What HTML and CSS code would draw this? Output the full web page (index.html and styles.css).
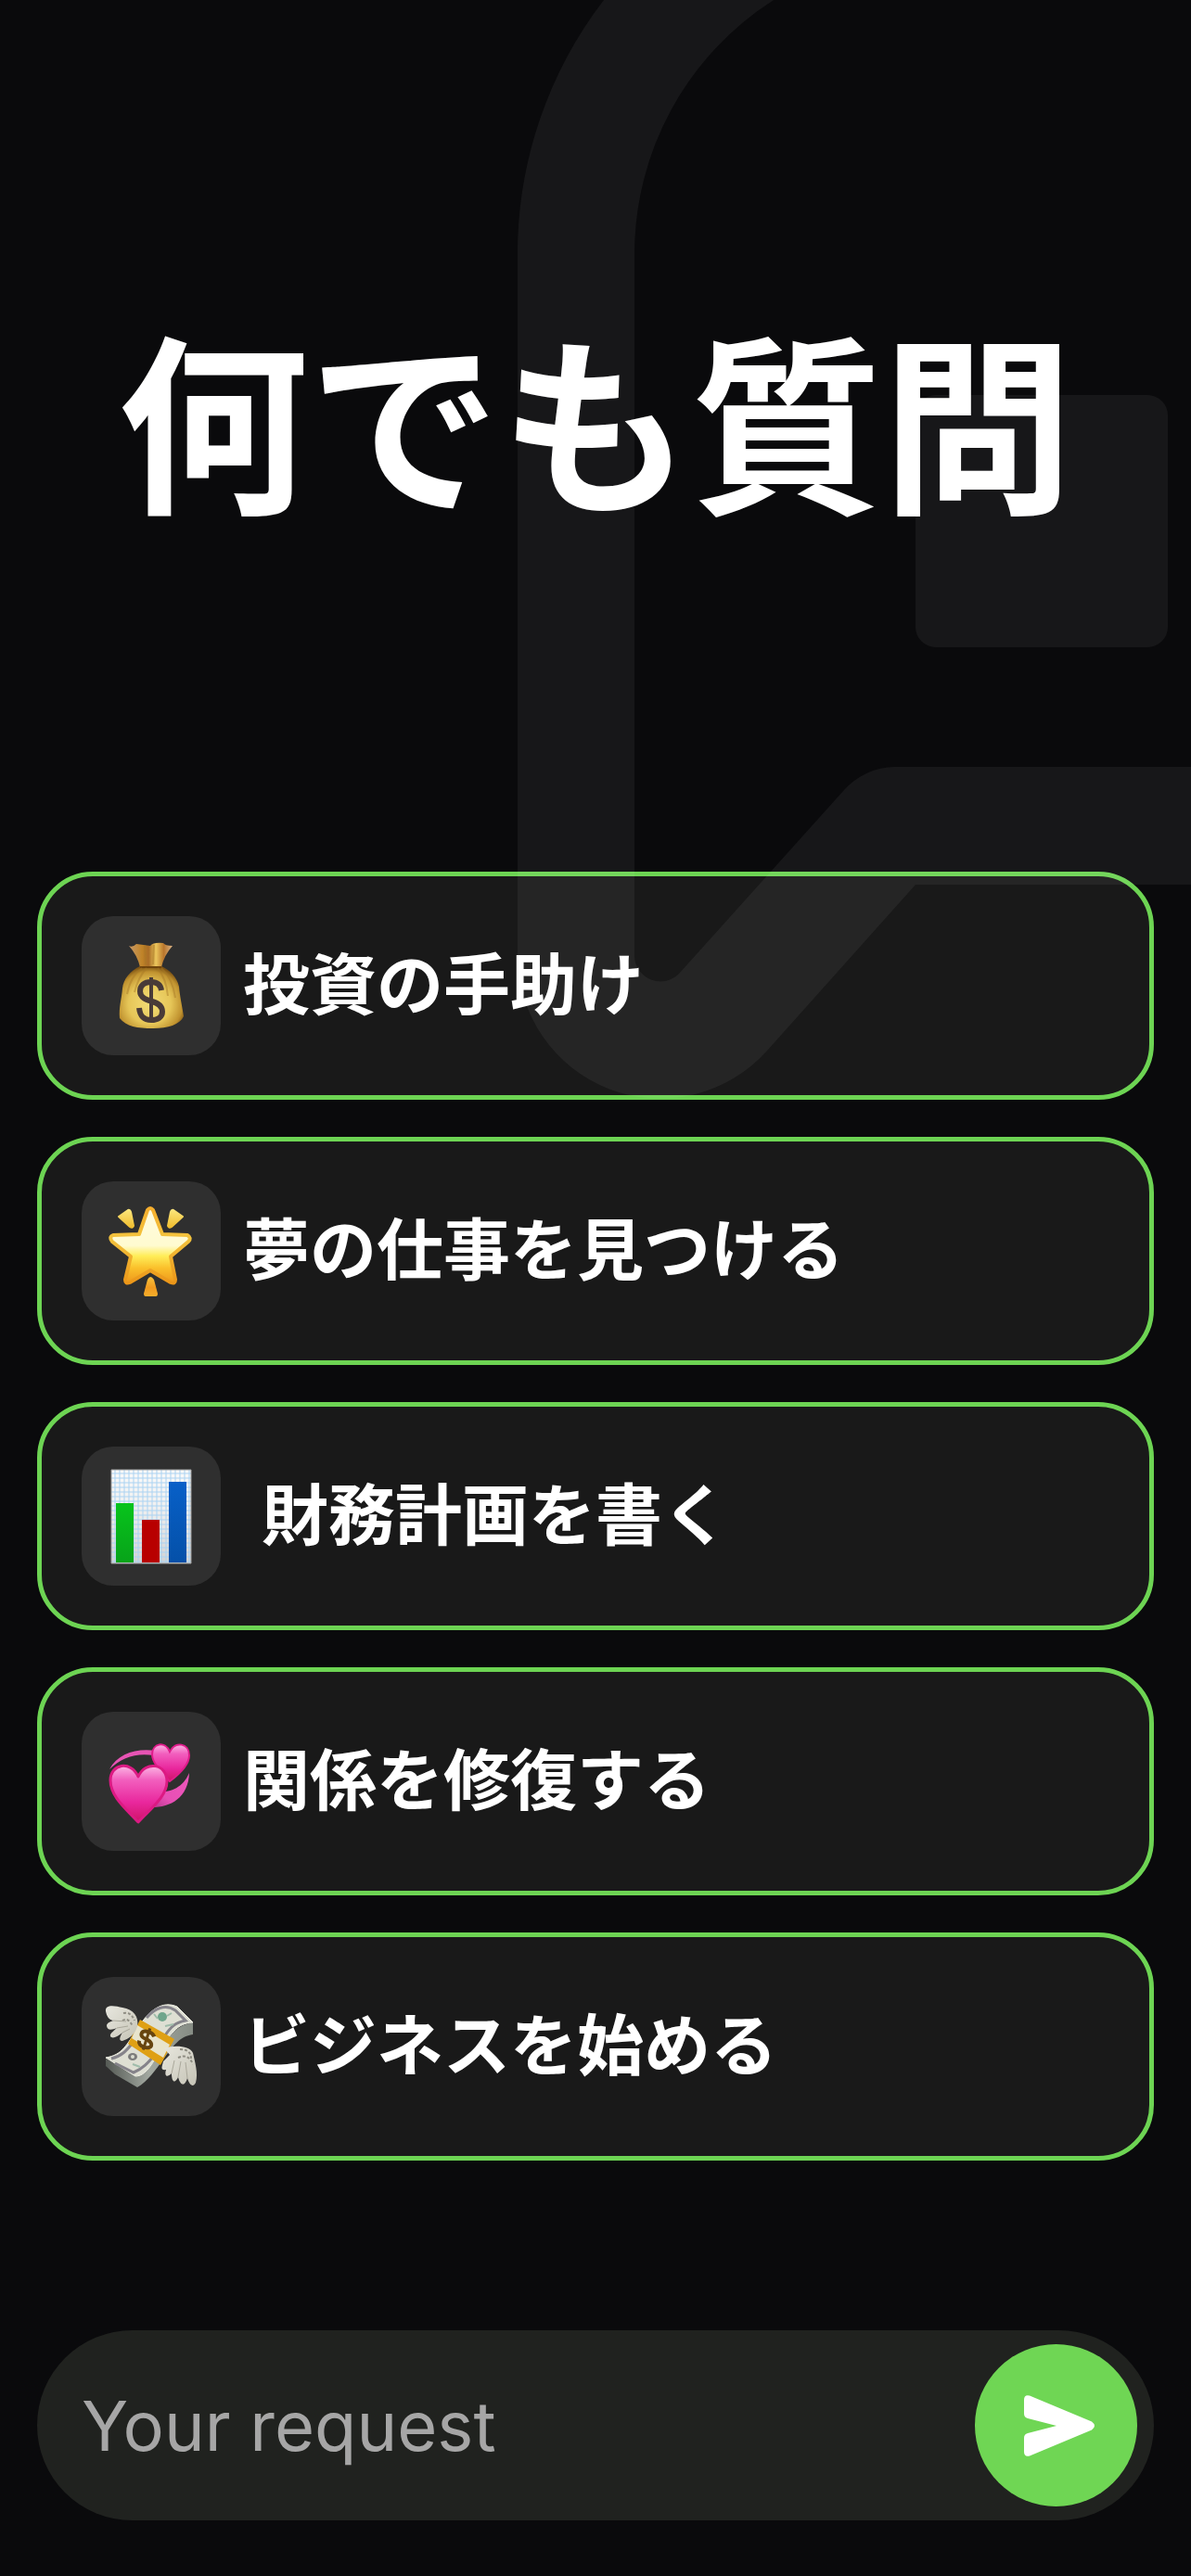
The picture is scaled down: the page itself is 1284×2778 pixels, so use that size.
FILE: index.html
```html
<!DOCTYPE html>
<html lang="ja">
<head>
<meta charset="utf-8">
<meta name="viewport" content="width=device-width, initial-scale=1">
<title>何でも質問</title>
<link rel="stylesheet" href="styles.css">
</head>
<body>
<main class="screen">
  <h1 class="title">何でも質問</h1>

  <div class="topics">
    <button class="topic" type="button">
      <span class="tile">
        <svg class="icon" viewBox="0 0 150 150" aria-hidden="true">
          <defs>
            <radialGradient id="bag" cx=".47" cy=".6" r=".6"><stop offset="0" stop-color="#f3dc76"/><stop offset=".55" stop-color="#e6c658"/><stop offset=".85" stop-color="#c0922f"/><stop offset="1" stop-color="#7c5213"/></radialGradient>
            <linearGradient id="neck" x1="0" x2="1" y1="0" y2="0"><stop offset="0" stop-color="#c99a68"/><stop offset=".3" stop-color="#c08428"/><stop offset=".45" stop-color="#a96c26"/><stop offset=".62" stop-color="#ecc65c"/><stop offset=".8" stop-color="#b9762c"/><stop offset="1" stop-color="#dcb487"/></linearGradient>
          </defs>
          <path fill="url(#bag)" d="M63 54C52 59 45 68 44 78C43 90 40 98 41 110C48 119 60 121 77 121C93 121 106 117 110 108C108 95 106 87 105 76C103 66 95 58 86 54Z"/>
          <path fill="url(#neck)" d="M51 32Q55 34 59 30Q67 31 74 32Q77 28 88 29Q90 32 98 32Q89 42 86 55H63Q60 42 51 32Z"/>
          <path d="M63 55H86" stroke="#71450c" stroke-width="2"/>
          <path fill="none" stroke="#a77725" stroke-opacity=".45" stroke-width="2" d="M65 56Q53 64 49 84M70 56Q61 66 57 82M82 56Q91 67 93 86M86 56Q98 67 101 88M68 31L69 52M78 31L77 52"/>
          <g fill="none" stroke="#493b38"><path stroke-width="6" d="M86 80C85 73 80 71 75 71C67 71 63 75 63 81C63 88 70 90 76 92C83 94 87 97 87 103C87 109 82 112 75 112C67 112 63 108 62 99"/><path stroke-width="4" d="M75 66V114"/></g>
        </svg>
      </span>
      <span class="label">投資の手助け</span>
    </button>

    <button class="topic" type="button">
      <span class="tile">
        <svg class="icon" viewBox="0 0 150 150" aria-hidden="true">
          <defs>
            <linearGradient id="star" x1="0" x2="0" y1="0" y2="1"><stop offset="0" stop-color="#fffbe0"/><stop offset=".5" stop-color="#fffbd0"/><stop offset=".64" stop-color="#ffed58"/><stop offset=".8" stop-color="#fac02b"/><stop offset="1" stop-color="#ee981b"/></linearGradient>
            <linearGradient id="rim" x1="0" x2="0" y1="0" y2="1"><stop offset="0" stop-color="#f5ae2e"/><stop offset=".4" stop-color="#f3c33d"/><stop offset="1" stop-color="#eb9619"/></linearGradient>
            <linearGradient id="ray" x1="0" x2="0" y1="0" y2="1"><stop offset="0" stop-color="#fbe57b"/><stop offset="1" stop-color="#f0bd2e"/></linearGradient>
            <linearGradient id="tail" x1="0" x2="0" y1="0" y2="1"><stop offset="0" stop-color="#f7c23c"/><stop offset=".55" stop-color="#f09a20"/><stop offset="1" stop-color="#f6ae2b"/></linearGradient>
          </defs>
          <path fill="url(#star)" stroke="url(#rim)" stroke-width="4" stroke-linejoin="round" d="M71 31Q74 27 77 31L87 57L114 58Q119 61 115 65L96 81L101 106Q101 111 96 109L74 96L52 109Q47 111 47 106L53 81L33 65Q29 60 34 58L62 57Z"/>
          <g fill="url(#ray)" stroke="url(#ray)" stroke-width="2" stroke-linejoin="round"><path d="M40 38L50 31Q52 30 53 33L56 48Q55 51 52 49Z"/><path d="M109 38L99 31Q97 30 96 33L93 48Q94 51 97 49Z"/></g>
          <path fill="url(#tail)" d="M71 106Q74 100 78 106L82 121Q82 124 80 124H69Q67 124 67 121Z"/>
        </svg>
      </span>
      <span class="label">夢の仕事を見つける</span>
    </button>

    <button class="topic" type="button">
      <span class="tile">
        <svg class="icon" viewBox="0 0 150 150" aria-hidden="true">
          <defs>
            <linearGradient id="sheet" x1="0" x2="0" y1="0" y2="1"><stop offset="0" stop-color="#fafafa"/><stop offset=".4" stop-color="#f0f0f0"/><stop offset="1" stop-color="#d3d3d3"/></linearGradient>
            <pattern id="grid" x="32" y="25" width="5" height="5" patternUnits="userSpaceOnUse"><path d="M4 0V5M0 4H5" stroke="#abd3f2" stroke-width="1"/></pattern>
            <linearGradient id="green" x1="0" x2="0" y1="0" y2="1"><stop offset="0" stop-color="#07c41c"/><stop offset="1" stop-color="#07a319"/></linearGradient>
            <linearGradient id="blue" x1="0" x2="0" y1="0" y2="1"><stop offset="0" stop-color="#0860c8"/><stop offset="1" stop-color="#0450a8"/></linearGradient>
          </defs>
          <path fill="url(#sheet)" d="M32 25H118V126H32Z"/>
          <path fill="url(#grid)" stroke="#9b9b9b" stroke-width="1" d="M32 25H118V126H32Z"/>
          <path fill="url(#green)" d="M37 61H56V125H37Z"/>
          <path fill="#b80000" d="M65 79H84V125H65Z"/>
          <path fill="url(#blue)" d="M94 38H113V125H94Z"/>
        </svg>
      </span>
      <span class="label"> 財務計画を書く</span>
    </button>

    <button class="topic" type="button">
      <span class="tile">
        <svg class="icon" viewBox="0 0 150 150" aria-hidden="true">
          <defs>
            <linearGradient id="heart" x1="0" x2="0" y1="0" y2="1"><stop offset="0" stop-color="#fbb5e4"/><stop offset=".25" stop-color="#f25fbe"/><stop offset=".65" stop-color="#e9279d"/><stop offset="1" stop-color="#cf1366"/></linearGradient>
            <linearGradient id="swirl" x1="0" x2="1" y1="1" y2="0"><stop offset="0" stop-color="#b23488"/><stop offset=".35" stop-color="#e74fb5"/><stop offset="1" stop-color="#ee57bb"/></linearGradient>
          </defs>
          <path fill="#e754b4" d="M30 62C39 45 59 39 80 42L78 47C59 44 43 49 30 62Z"/>
          <path fill="url(#swirl)" d="M73 103C94 104 115 94 116 66C109 82 97 86 83 87Z"/>
          <path fill="url(#heart)" stroke="#e01c8b" stroke-width="2" d="M95 75C83 62 76 54 76 46C76 34 90 31 95 43C101 31 116 34 116 47C116 57 107 66 95 75Z"/>
          <path fill="url(#heart)" stroke="#dc1a83" stroke-width="3" stroke-linejoin="round" d="M61 119C47 104 31 91 31 74C31 56 53 52 61 70C69 52 92 56 92 75C92 91 75 104 61 119Z"/>
        </svg>
      </span>
      <span class="label">関係を修復する</span>
    </button>

    <button class="topic" type="button">
      <span class="tile">
        <svg class="icon" viewBox="0 0 150 150" aria-hidden="true">
          <defs>
            <linearGradient id="edge" x1="0" x2="1" y1="0" y2="0"><stop offset="0" stop-color="#555a55"/><stop offset=".5" stop-color="#a2a8a0"/><stop offset="1" stop-color="#868c84"/></linearGradient>
            <linearGradient id="wing" x1="0" x2="1" y1="0" y2="1"><stop offset="0" stop-color="#e8e7df"/><stop offset="1" stop-color="#c5c3b5"/></linearGradient>
          </defs>
          <path fill="url(#edge)" d="M26 88L59 107C72 104 80 86 94 66C101 55 110 51 120 49V62C105 64 99 75 90 86C80 100 71 113 60 119L36 105L26 96Z"/>
          <path fill="#dedfd3" stroke="#f0f0e6" stroke-width="1" d="M26 87C44 84 48 74 62 53C73 36 87 25 103 32L120 49C102 50 96 62 84 80C76 94 69 107 58 107Z"/>
          <path fill="none" stroke="#85838a" stroke-width="3" d="M32 88C45 85 50 77 56 70M36 93L56 103C66 99 72 92 78 85M70 44C79 33 91 29 101 36L112 47C101 49 96 54 90 63"/>
          <ellipse cx="55" cy="86" rx="5" ry="4" fill="#7b7b7b"/><circle cx="55" cy="86" r="2" fill="#dadcd0"/>
          <ellipse cx="87" cy="43" rx="5" ry="5" fill="#6fa58b"/>
          <path fill="none" stroke="#9fbcaa" stroke-width="2" d="M78 40L82 45M92 42L97 39M55 94L63 97M90 53L99 51"/>
          <path fill="#dfa014" d="M63 46L100 67L85 95L50 72Z"/>
          <path fill="#e8e4cc" d="M60 52L95 73L88 87L54 66Z"/>
          <g fill="none" stroke="#67450f" transform="translate(70 67) rotate(18)"><path stroke-width="4" d="M7-5C5-8 2-8 0-8C-4-8-7-7-7-4C-7-1-3 0 0 0C4 1 7 2 7 5C7 8 3 9 0 9C-4 9-7 7-7 4"/><path stroke-width="3" d="M0-12V12"/></g>
          <path fill="url(#wing)" d="M26 37C25 29 36 31 44 33C56 35 62 43 60 53C58 62 50 67 44 69C39 69 42 63 44 60C38 65 33 67 31 64C30 61 36 57 38 55C31 58 27 57 27 52C28 49 32 48 34 47C29 46 27 42 26 37Z"/>
          <path fill="url(#wing)" d="M89 77C99 73 117 74 120 82C122 91 126 104 123 114C120 120 116 116 114 109C112 117 107 119 104 108C101 115 97 114 97 104C92 109 89 107 91 100C84 101 87 96 88 91L95 84Z"/>
          <path fill="none" stroke="#8f8d83" stroke-width="2" stroke-dasharray="3 2" d="M45 39Q53 37 57 47M44 47Q50 43 55 53M106 78Q118 78 118 88M104 87Q115 82 120 94"/>
          <path fill="none" stroke="#aaa89b" stroke-width="1" d="M34 47L48 48M38 55L50 53M44 60L52 56M97 104L100 90M104 108L107 91M114 109L112 92"/>
        </svg>
      </span>
      <span class="label">ビジネスを始める</span>
    </button>
  </div>

  <form class="composer">
    <input class="field" type="text" placeholder="Your request" aria-label="Your request">
    <button class="send" type="submit" aria-label="Send">
      <svg class="plane" viewBox="0 0 76 66" aria-hidden="true"><path fill="#fff" d="M6 .5L73 28.500Q79 33 73 37.500L6 65.500Q0 67 0 61V46Q0 42 4 41L35 33L4 25Q0 24 0 20V5Q0-1 6 .5Z"/></svg>
    </button>
  </form>

  <svg class="watermark" viewBox="0 0 726 1184" aria-hidden="true">
    <path fill="#fff" d="M93 0A450 450 0 0 0 0 274V1030A154 154 0 0 0 269 1133L429 954H726V827H407A74 74 0 0 0 352 852L175 1049A28 28 0 0 1 126 1030V274A325 325 0 0 1 276 0Z"/>
    <rect fill="#fff" x="429" y="426" width="272" height="272" rx="22"/>
  </svg>
</main>
</body>
</html>
```
FILE: styles.css
```css
* {
  box-sizing: border-box;
}

body {
  margin: 0;
  background: #0a0a0c;
  color: #fff;
  font-family: Inter, "Noto Sans CJK JP", sans-serif;
}

button,
input {
  border: 0;
  color: inherit;
  font: inherit;
}

.screen {
  position: relative;
  display: flex;
  flex-direction: column;
  min-height: 100vh;
  padding: 0 40px 60px;
  overflow: hidden;
}

.title {
  margin: 0;
  padding: 298px 0 342px;
  font-family: "Noto Sans CJK JP", sans-serif;
  font-size: 206px;
  font-weight: 700;
  line-height: 300px;
  text-align: center;
  white-space: nowrap;
}

.topics {
  display: flex;
  flex-direction: column;
  gap: 40px;
}

.topic {
  display: flex;
  align-items: center;
  gap: 24px;
  width: 100%;
  padding: 43px;
  border: 5px solid #6dd453;
  border-radius: 60px;
  background: #191919;
  text-align: left;
}

.tile {
  flex: none;
  width: 150px;
  height: 150px;
  border-radius: 34px;
  background: #2f2f2f;
}

.icon {
  display: block;
  width: 100%;
  height: 100%;
}

.label {
  font-family: "Liberation Sans", "Noto Sans CJK JP", sans-serif;
  font-size: 72px;
  font-weight: 700;
  line-height: 100px;
  white-space: pre;
}

.composer {
  display: flex;
  align-items: center;
  margin-top: auto;
  padding: 15px 18px 15px 48px;
  border-radius: 103px;
  background: #20221f;
}

.field {
  flex: 1;
  min-width: 0;
  padding: 0;
  background: none;
  font-size: 74px;
  line-height: 100px;
  outline: 0;
}

.field::placeholder {
  color: #a6a6a6;
  opacity: 1;
}

.send {
  display: flex;
  flex: none;
  align-items: center;
  justify-content: center;
  width: 175px;
  height: 175px;
  padding: 0 0 0 6px;
  border-radius: 50%;
  background: #6fd654;
}

.plane {
  width: 76px;
  height: 66px;
}

/* Decorative outline laid over the cards */
.watermark {
  position: absolute;
  top: 0;
  right: 0;
  width: 726px;
  height: 1184px;
  opacity: .05;
  pointer-events: none;
}
```
